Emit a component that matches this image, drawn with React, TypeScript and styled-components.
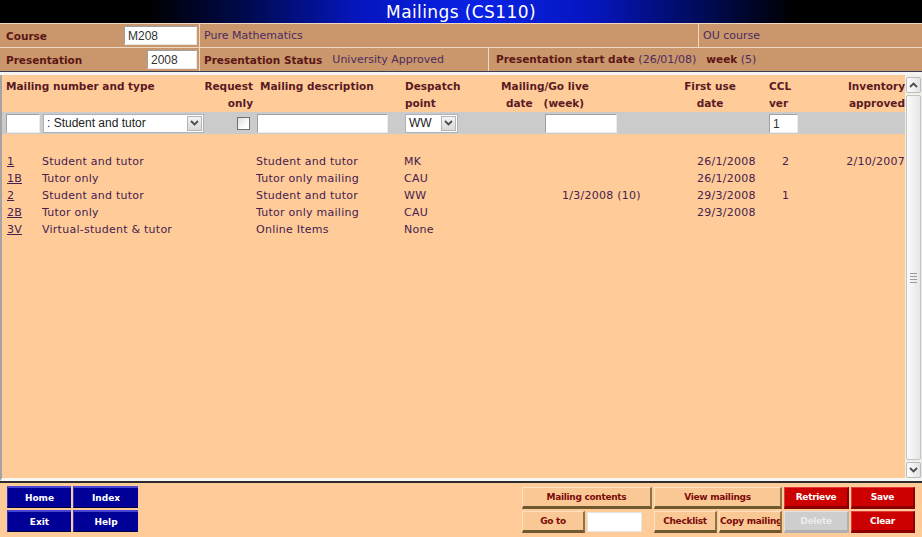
import React from "react";
import styled, { createGlobalStyle } from "styled-components";

const Global = createGlobalStyle`
  html, body { margin: 0; padding: 0; width: 922px; height: 537px; overflow: hidden; background: #ffcc99; }
  body { font-family: "DejaVu Sans", Verdana, sans-serif; }
  #root { width: 922px; height: 537px; }
  * { box-sizing: border-box; }
`;

const COLS = "40px 150px 63px 145px 70px 210px 85px 40px 100px";

const Page = styled.div`
  display: flex;
  flex-direction: column;
  width: 922px;
  height: 537px;
`;

const TitleBar = styled.div`
  height: 23px;
  display: flex;
  align-items: center;
  justify-content: center;
  background: linear-gradient(90deg, #000 0%, #000 16%, #000a50 27%, #0516c0 39%, #0a22e6 52%, #0516c0 64%, #000a50 77%, #000 86%, #000 100%);
  color: #fff;
  font-size: 17px;
  letter-spacing: 0.4px;
`;

const InfoRow = styled.div<{ $cols: string }>`
  display: grid;
  grid-template-columns: ${(p) => p.$cols};
  height: 24px;
  border-top: 1px solid #efd9c3;
  background: #c9976b;
`;

const InfoCell = styled.div<{ $pl?: number }>`
  display: flex;
  align-items: center;
  gap: 10px;
  padding: 0 2px 0 ${(p) => p.$pl ?? 4}px;
  border-left: 1px solid #efd9c3;
  font-size: 11px;
  color: #4d2a5e;
  white-space: nowrap;
  &:first-child { border-left: none; }
`;

const Label = styled.span`
  font-weight: bold;
  color: #5c1616;
  font-size: 10.5px;
`;

const Spacer = styled.span`
  flex: 1;
`;

const TextBox = styled.div<{ $w: number }>`
  width: ${(p) => p.$w}px;
  height: 19px;
  background: #fff;
  border: 1px solid;
  border-color: #a0a0a0 #ececec #ececec #a0a0a0;
  font: 12px "Liberation Sans", Arial, sans-serif;
  color: #333;
  padding: 2px 3px 0;
  flex-shrink: 0;
`;

const DarkRule = styled.div`
  height: 1px;
  background: #3c3c52;
`;

const LightRule = styled.div`
  height: 3px;
  background: #f4f4f4;
`;

const Main = styled.div`
  height: 406px;
  display: flex;
  background: #ffcc99;
  border-left: 2px solid #a3a3a3;
  border-right: 1px solid #e9e9e9;
  border-bottom: 3px solid #f6f6f6;
`;

const Content = styled.div`
  width: 903px;
  display: flex;
  flex-direction: column;
`;

const Grid = styled.div`
  display: grid;
  grid-template-columns: ${COLS};
`;

const HeadRow = styled(Grid)`
  padding-top: 3px;
  height: 37px;
  font-weight: bold;
  font-size: 10.5px;
  line-height: 17px;
  color: #5a1a24;
`;

const HeadCell = styled.div<{ $span?: number; $align?: string; $pl?: number; $pr?: number }>`
  grid-column: span ${(p) => p.$span ?? 1};
  text-align: ${(p) => p.$align ?? "left"};
  padding-left: ${(p) => p.$pl ?? 0}px;
  padding-right: ${(p) => p.$pr ?? 0}px;
  white-space: nowrap;
`;

const FilterRow = styled(Grid)`
  height: 22px;
  background: #cbcbcb;
  align-items: center;
`;

const FilterCell = styled.div<{ $pl?: number; $justify?: string; $pr?: number }>`
  display: flex;
  justify-content: ${(p) => p.$justify ?? "flex-start"};
  padding-left: ${(p) => p.$pl ?? 0}px;
  padding-right: ${(p) => p.$pr ?? 0}px;
`;

const SelectBox = styled.div<{ $w: number }>`
  width: ${(p) => p.$w}px;
  height: 19px;
  flex-shrink: 0;
  display: flex;
  align-items: center;
  background: #fff;
  border: 1px solid #a9b2bd;
  padding: 0 1px 0 3px;
  font: 12px "Liberation Sans", Arial, sans-serif;
  color: #222;
  white-space: nowrap;
`;

const SelectArrow = styled.span`
  margin-left: auto;
  width: 15px;
  height: 15px;
  display: flex;
  align-items: center;
  justify-content: center;
  background: linear-gradient(180deg, #f4f4f4, #d9d9d9);
  border: 1px solid #b4b4b4;
`;

const CheckBox = styled.span`
  width: 13px;
  height: 13px;
  background: linear-gradient(135deg, #dcdcdc, #fff 70%);
  border: 1px solid #6f6f6f;
`;

const DataArea = styled.div`
  margin-top: 19px;
  display: flex;
  flex-direction: column;
`;

const DataRow = styled(Grid)`
  height: 17px;
  line-height: 17px;
  font-size: 11px;
  letter-spacing: 0.25px;
  color: #46204e;
`;

const DataCell = styled.div<{ $pl?: number; $align?: string }>`
  padding-left: ${(p) => p.$pl ?? 0}px;
  text-align: ${(p) => p.$align ?? "left"};
  white-space: nowrap;
`;

const NumLink = styled.a`
  color: #46204e;
  text-decoration: underline;
`;

const ScrollBar = styled.div`
  width: 16px;
  display: flex;
  flex-direction: column;
  background: #f1f0eb;
  padding: 2px 0 0 1px;
`;

const ScrollBtn = styled.div`
  height: 16px;
  display: flex;
  align-items: center;
  justify-content: center;
  border: 1px solid #bcbcbc;
  border-radius: 2px;
  background: linear-gradient(90deg, #fdfdfd, #e3e3e3);
`;

const Thumb = styled.div`
  flex: 1;
  margin: 2px 0;
  display: flex;
  flex-direction: column;
  align-items: center;
  justify-content: center;
  gap: 2px;
  border: 1px solid #c4c4c4;
  border-radius: 2px;
  background: linear-gradient(90deg, #fbfbfb, #e6e6e6);
`;

const GripLine = styled.span`
  width: 7px;
  height: 1px;
  background: #9a9a9a;
`;

const BottomRule = styled.div`
  height: 2px;
  background: #2c2c2c;
`;

const Toolbar = styled.div`
  flex: 1;
  display: flex;
  padding: 3px 7px 0;
  background: #ffcc99;
`;

const NavGrid = styled.div`
  display: grid;
  grid-template-columns: 64px 65px;
  grid-auto-rows: 22px;
  gap: 2px;
`;

const NavButton = styled.button`
  background: #000096;
  color: #fff;
  font: bold 9px "DejaVu Sans", Verdana, sans-serif;
  border: none;
  border-top: 2px solid #4646d2;
  border-left: 1px solid #2d2dbe;
  border-bottom: 1px solid #00003c;
  padding: 0;
`;

const ActionGrid = styled.div`
  margin-left: auto;
  margin-top: 1px;
  display: grid;
  grid-template-columns: 63px 65px 63px 63px 65px 64px;
  grid-auto-rows: 22px;
  gap: 2px;
`;

const ActionButton = styled.button<{ $span?: number; $kind?: "tan" | "red" | "off" }>`
  grid-column: span ${(p) => p.$span ?? 1};
  font: bold 9px "DejaVu Sans", Verdana, sans-serif;
  letter-spacing: -0.3px;
  padding: 0;
  white-space: nowrap;
  overflow: hidden;
  background: ${(p) => (p.$kind === "red" ? "#cc0000" : p.$kind === "off" ? "#cecece" : "#f9c894")};
  color: ${(p) => (p.$kind === "red" ? "#fff" : p.$kind === "off" ? "#ececec" : "#7c0a0a")};
  border: none;
  border-top: 1px solid ${(p) => (p.$kind === "red" ? "#e23a3a" : p.$kind === "off" ? "#e2e2e2" : "#fde2c4")};
  border-left: 1px solid ${(p) => (p.$kind === "red" ? "#e23a3a" : p.$kind === "off" ? "#e2e2e2" : "#fde2c4")};
  border-right: 2px solid ${(p) => (p.$kind === "red" ? "#8a0000" : p.$kind === "off" ? "#b0b0b0" : "#8a7448")};
  border-bottom: 3px solid ${(p) => (p.$kind === "red" ? "#8a0000" : p.$kind === "off" ? "#b0b0b0" : "#6e5a2e")};
`;

const GoToInput = styled.div`
  width: 55px;
  height: 20px;
  margin-top: 1px;
  background: #fff;
  border: 1px solid #e4e4e4;
`;

const Chevron = ({ up }: { up?: boolean }) => (
  <svg width="9" height="6" viewBox="0 0 9 6">
    <path
      d={up ? "M1 5 L4.5 1.5 L8 5" : "M1 1 L4.5 4.5 L8 1"}
      fill="none"
      stroke="#4d4d4d"
      strokeWidth="1.8"
    />
  </svg>
);

const rows = [
  { no: "1", type: "Student and tutor", desc: "Student and tutor", desp: "MK", date: "", first: "26/1/2008", ccl: "2", inv: "2/10/2007" },
  { no: "1B", type: "Tutor only", desc: "Tutor only mailing", desp: "CAU", date: "", first: "26/1/2008", ccl: "", inv: "" },
  { no: "2", type: "Student and tutor", desc: "Student and tutor", desp: "WW", date: "1/3/2008 (10)", first: "29/3/2008", ccl: "1", inv: "" },
  { no: "2B", type: "Tutor only", desc: "Tutor only mailing", desp: "CAU", date: "", first: "29/3/2008", ccl: "", inv: "" },
  { no: "3V", type: "Virtual-student & tutor", desc: "Online Items", desp: "None", date: "", first: "", ccl: "", inv: "" },
];

export default function App() {
  return (
    <Page>
      <Global />
      <TitleBar>Mailings (CS110)</TitleBar>
      <InfoRow $cols="199px 499px 1fr">
        <InfoCell $pl={6}>
          <Label>Course</Label>
          <Spacer />
          <TextBox $w={73}>M208</TextBox>
        </InfoCell>
        <InfoCell>Pure Mathematics</InfoCell>
        <InfoCell>OU course</InfoCell>
      </InfoRow>
      <InfoRow $cols="199px 289px 1fr">
        <InfoCell $pl={6}>
          <Label>Presentation</Label>
          <Spacer />
          <TextBox $w={50}>2008</TextBox>
        </InfoCell>
        <InfoCell>
          <Label>Presentation Status</Label>
          <span>University Approved</span>
        </InfoCell>
        <InfoCell $pl={7}>
          <span>
            <Label>Presentation start date</Label> (26/01/08)
          </span>
          <span>
            <Label>week</Label> (5)
          </span>
        </InfoCell>
      </InfoRow>
      <DarkRule />
      <LightRule />
      <Main>
        <Content>
          <HeadRow>
            <HeadCell $span={2} $pl={4}>Mailing number and type</HeadCell>
            <HeadCell $align="right" $pr={2}>
              Request<br />only
            </HeadCell>
            <HeadCell $pl={5}>Mailing description</HeadCell>
            <HeadCell $pl={5}>
              Despatch<br />point
            </HeadCell>
            <HeadCell $align="center" $pr={60}>
              Mailing/Go live<br />date&nbsp;&nbsp;&nbsp;(week)
            </HeadCell>
            <HeadCell $align="center" $pr={25}>
              First use<br />date
            </HeadCell>
            <HeadCell $pl={4}>
              CCL<br />ver
            </HeadCell>
            <HeadCell $align="right">
              Inventory<br />approved
            </HeadCell>
          </HeadRow>
          <FilterRow>
            <FilterCell $pl={4}>
              <TextBox $w={34} />
            </FilterCell>
            <FilterCell $pl={1}>
              <SelectBox $w={161}>
                : Student and tutor
                <SelectArrow>
                  <Chevron />
                </SelectArrow>
              </SelectBox>
            </FilterCell>
            <FilterCell $justify="flex-end" $pr={5}>
              <CheckBox />
            </FilterCell>
            <FilterCell $pl={2}>
              <TextBox $w={131} />
            </FilterCell>
            <FilterCell $pl={5}>
              <SelectBox $w={53}>
                WW
                <SelectArrow>
                  <Chevron />
                </SelectArrow>
              </SelectBox>
            </FilterCell>
            <FilterCell $pl={75}>
              <TextBox $w={72} />
            </FilterCell>
            <FilterCell />
            <FilterCell $pl={4}>
              <TextBox $w={29}>1</TextBox>
            </FilterCell>
            <FilterCell />
          </FilterRow>
          <DataArea>
            {rows.map((r) => (
              <DataRow key={r.no}>
                <DataCell $pl={5}>
                  <NumLink href="#">{r.no}</NumLink>
                </DataCell>
                <DataCell>{r.type}</DataCell>
                <DataCell />
                <DataCell $pl={1}>{r.desc}</DataCell>
                <DataCell $pl={4}>{r.desp}</DataCell>
                <DataCell $pl={92}>{r.date}</DataCell>
                <DataCell $pl={17}>{r.first}</DataCell>
                <DataCell $pl={17}>{r.ccl}</DataCell>
                <DataCell $align="right">{r.inv}</DataCell>
              </DataRow>
            ))}
          </DataArea>
        </Content>
        <ScrollBar>
          <ScrollBtn>
            <Chevron up />
          </ScrollBtn>
          <Thumb>
            <GripLine />
            <GripLine />
            <GripLine />
            <GripLine />
          </Thumb>
          <ScrollBtn>
            <Chevron />
          </ScrollBtn>
        </ScrollBar>
      </Main>
      <BottomRule />
      <Toolbar>
        <NavGrid>
          <NavButton>Home</NavButton>
          <NavButton>Index</NavButton>
          <NavButton>Exit</NavButton>
          <NavButton>Help</NavButton>
        </NavGrid>
        <ActionGrid>
          <ActionButton $span={2}>Mailing contents</ActionButton>
          <ActionButton $span={2}>View mailings</ActionButton>
          <ActionButton $kind="red">Retrieve</ActionButton>
          <ActionButton $kind="red">Save</ActionButton>
          <ActionButton>Go to</ActionButton>
          <GoToInput />
          <ActionButton>Checklist</ActionButton>
          <ActionButton>Copy mailing</ActionButton>
          <ActionButton $kind="off">Delete</ActionButton>
          <ActionButton $kind="red">Clear</ActionButton>
        </ActionGrid>
      </Toolbar>
    </Page>
  );
}
